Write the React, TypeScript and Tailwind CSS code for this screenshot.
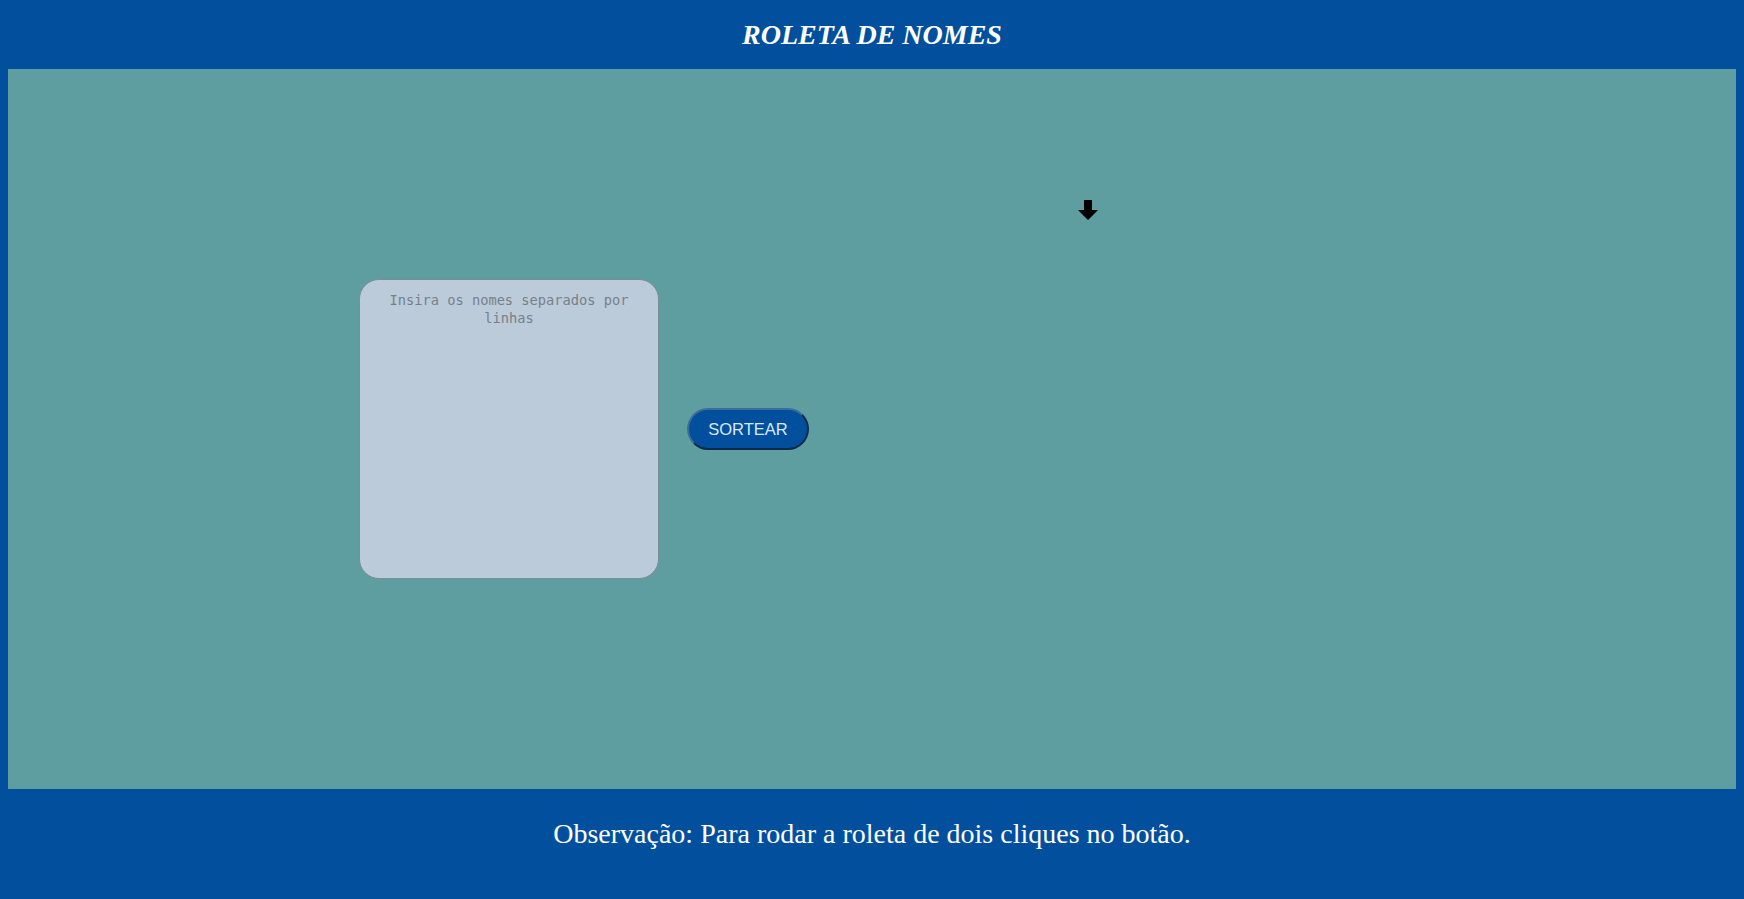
import { useState } from 'react';

export default function App() {
  const [nomes, setNomes] = useState('');

  return (
    <div className="min-h-screen w-full bg-[#02509d] flex flex-col" style={{ fontFamily: '"Liberation Serif", serif' }}>
      {/* cabeçalho */}
      <header className="h-[69px] flex items-center justify-center">
        <h1 className="text-[28px] font-bold italic text-white">ROLETA DE NOMES</h1>
      </header>

      {/* área da roleta */}
      <main className="mx-2 h-[720px] bg-[#5f9ea0] flex items-center pl-[351px]">
        <textarea
          value={nomes}
          onChange={(e) => setNomes(e.target.value)}
          placeholder="Insira os nomes separados por linhas"
          className="w-[300px] h-[300px] resize-none rounded-[20px] border border-[#7f8c95] bg-[#bccbd9] px-6 pt-[11px] text-center text-[13.7px] leading-[18px] text-[#444] placeholder:text-[#76808a] outline-none"
          style={{ fontFamily: '"DejaVu Sans Mono", monospace' }}
        />
        <button
          type="button"
          className="ml-[28px] w-[122px] h-[42px] rounded-full bg-[#02509d] border-2 border-[#0a2a4a] border-t-[#3f6c96] border-l-[#3f6c96] text-[16.5px] text-[#d9e8f7]"
          style={{ fontFamily: '"Liberation Sans", Arial, sans-serif' }}
        >
          SORTEAR
        </button>
        <div className="ml-[29px] w-[500px] h-[458px] flex flex-col items-center">
          <svg width="20" height="20" viewBox="0 0 20 20" className="shrink-0">
            <path d="M6 0 H14 V10 H20 L10 20 L0 10 H6 Z" fill="#000" />
          </svg>
          <div className="flex-1" />
        </div>
      </main>

      {/* rodapé */}
      <footer className="h-[110px] flex items-center justify-center">
        <p className="text-[28px] text-white -mt-[20px]">Observação: Para rodar a roleta de dois cliques no botão.</p>
      </footer>
    </div>
  );
}
